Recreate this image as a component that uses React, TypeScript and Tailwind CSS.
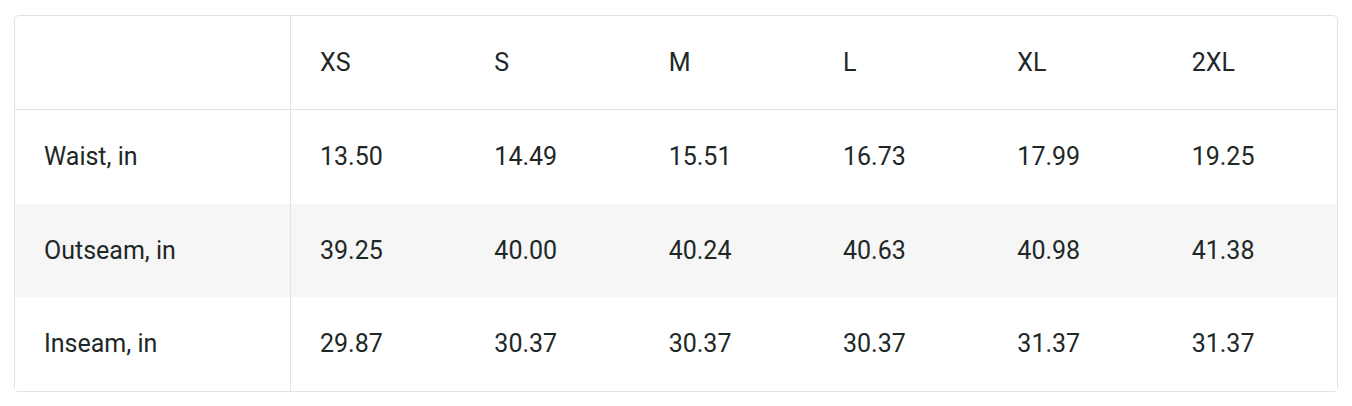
import React from 'react'

const sizes = ['XS', 'S', 'M', 'L', 'XL', '2XL']

const rows = [
    { label: 'Waist, in', h: 'h-[94px] bg-white', values: ['13.50', '14.49', '15.51', '16.73', '17.99', '19.25'] },
    { label: 'Outseam, in', h: 'h-[93px] bg-[#f6f6f6]', values: ['39.25', '40.00', '40.24', '40.63', '40.98', '41.38'] },
    { label: 'Inseam, in', h: 'h-[94px] bg-white', values: ['29.87', '30.37', '30.37', '30.37', '31.37', '31.37'] },
]

export default function App() {
    return (
        <div className="w-[1352px] h-[406px] bg-white pt-[15px] pl-[14px] font-['Roboto',sans-serif] text-[25px] text-[#1e2828]">
            <div className="w-[1324px] border border-[#e2e2e2] rounded-[5px] overflow-hidden">
                {/* header */}
                <div className="grid grid-cols-[276px_repeat(6,minmax(0,1fr))] h-[94px] border-b border-[#e2e2e2]">
                    <div className="border-r border-[#e2e2e2]" />
                    {sizes.map((s) => (
                        <div key={s} className="flex items-center pl-[29px]">
                            {s}
                        </div>
                    ))}
                </div>
                {rows.map((row) => (
                    <div
                        key={row.label}
                        className={'grid grid-cols-[276px_repeat(6,minmax(0,1fr))] ' + row.h}
                    >
                        <div className="flex items-center pl-[29px] border-r border-[#e2e2e2]">
                            {row.label}
                        </div>
                        {row.values.map((v, j) => (
                            <div key={j} className="flex items-center pl-[29px]">
                                {v}
                            </div>
                        ))}
                    </div>
                ))}
            </div>
        </div>
    )
}
